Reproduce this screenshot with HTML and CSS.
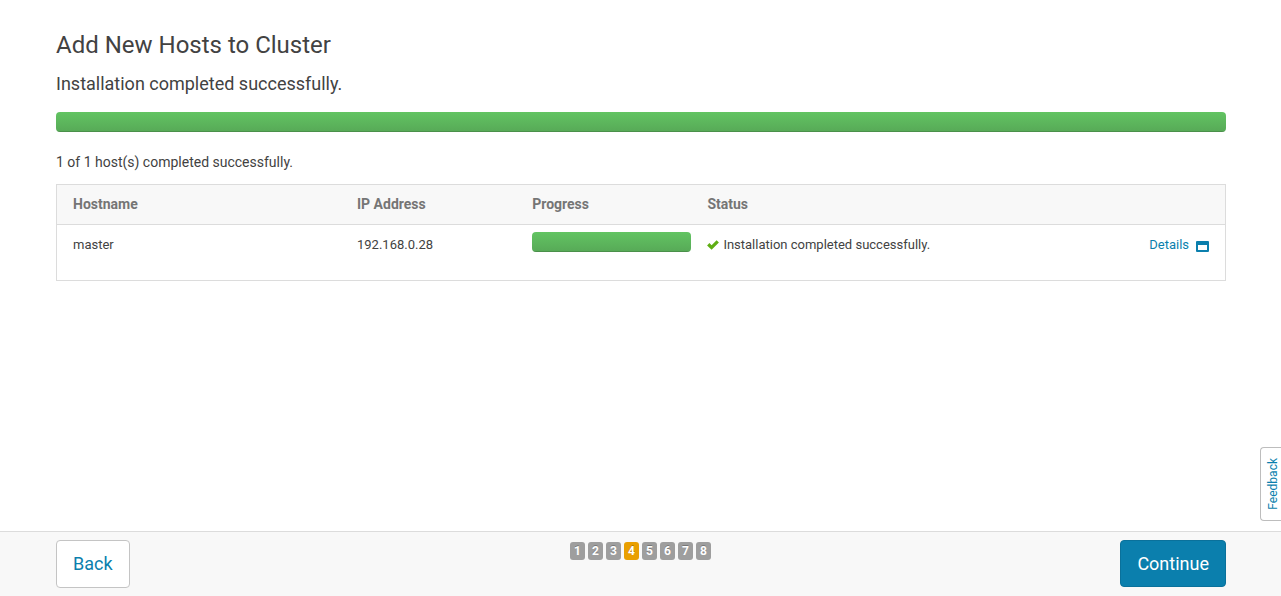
FILE: index.html
```html
<!DOCTYPE html>
<html lang="en">
<head>
<meta charset="utf-8">
<title>Add New Hosts to Cluster</title>
<link rel="stylesheet" href="styles.css">
</head>
<body class="page">
<main class="content">
  <h1 class="title">Add New Hosts to Cluster</h1>
  <h2 class="subtitle">Installation completed successfully.</h2>
  <div class="progress" role="progressbar" aria-label="Installation" aria-valuenow="100"><div class="progress-fill" style="width: 100%"></div></div>
  <p class="summary">1 of 1 host(s) completed successfully.</p>
  <table class="hosts">
    <thead>
      <tr>
        <th class="col-host">Hostname</th>
        <th class="col-fixed">IP Address</th>
        <th class="col-fixed">Progress</th>
        <th>Status</th>
        <th class="col-details"></th>
      </tr>
    </thead>
    <tbody>
      <tr>
        <td class="text-cell">master</td>
        <td class="text-cell">192.168.0.28</td>
        <td><div class="progress" role="progressbar" aria-label="master" aria-valuenow="100"><div class="progress-fill" style="width: 100%"></div></div></td>
        <td class="text-cell"><span class="status"><svg class="check" viewBox="0 0 12 10" aria-hidden="true"><path d="M0.1 5.4 2.4 3.1 4.6 5.2 9.6 0.3 11.9 2.6 4.6 9.8Z"/></svg>Installation completed successfully.</span></td>
        <td class="text-cell"><a class="details" href="#details">Details<svg class="window" viewBox="0 0 13 11" aria-hidden="true"><path fill-rule="evenodd" d="M1 0H12Q13 0 13 1V10Q13 11 12 11H1Q0 11 0 10V1Q0 0 1 0ZM2 4V9H11V4Z"/></svg></a></td>
      </tr>
    </tbody>
  </table>
</main>
<button class="feedback" type="button">Feedback</button>
<footer class="footer">
  <button class="btn" type="button">Back</button>
  <ol class="steps">
    <li class="step">1</li>
    <li class="step">2</li>
    <li class="step">3</li>
    <li class="step step-current" aria-current="step">4</li>
    <li class="step">5</li>
    <li class="step">6</li>
    <li class="step">7</li>
    <li class="step">8</li>
  </ol>
  <button class="btn btn-primary" type="button">Continue</button>
</footer>
</body>
</html>
```

FILE: styles.css
```css
* {
  box-sizing: border-box;
}

.page {
  display: flex;
  flex-direction: column;
  min-height: 100vh;
  margin: 0;
  background: #fff;
  color: #424242;
  font-family: Roboto, "Liberation Sans", sans-serif;
  font-size: 14px;
  line-height: 20px;
}

.content {
  flex: 1;
  padding: 28px 55px 28px 56px;
}

.title {
  margin: 0;
  font-size: 24px;
  font-weight: 400;
  line-height: 34px;
}

.subtitle {
  margin: 10px 0 16px;
  font-size: 18px;
  font-weight: 400;
  line-height: 24px;
}

.progress {
  height: 20px;
  margin-bottom: 20px;
  overflow: hidden;
  border-radius: 4px;
  background: #f5f5f5;
}

.progress-fill {
  height: 100%;
  background: linear-gradient(#62c462, #57a957);
  box-shadow: inset 0 -1px 0 rgba(0, 0, 0, 0.15);
}

.summary {
  margin: 0 0 12px;
}

.hosts {
  width: 100%;
  table-layout: fixed;
  border: 1px solid #dcdcdc;
  border-spacing: 0;
  font-size: 13px;
}

.hosts th {
  height: 40px;
  padding: 0 8px 2px;
  border-bottom: 1px solid #dcdcdc;
  background: #f8f8f8;
  color: #757575;
  font-size: 14px;
  font-weight: 700;
  text-align: left;
}

.hosts td {
  padding: 7px 8px 8px;
  vertical-align: top;
}

.hosts .text-cell {
  padding-top: 10px;
}

.hosts th:first-child,
.hosts td:first-child {
  padding-left: 16px;
}

.hosts th:last-child,
.hosts td:last-child {
  padding-right: 16px;
}

.col-host {
  width: 25%;
}

.col-fixed {
  width: 15%;
}

.col-details {
  width: 100px;
}

.status {
  display: flex;
  align-items: center;
  gap: 4px;
}

.check {
  width: 12px;
  height: 10px;
  fill: #5fae14;
}

.details {
  display: flex;
  align-items: center;
  justify-content: flex-end;
  gap: 7px;
  color: #0b7fad;
  text-decoration: none;
}

.window {
  width: 13px;
  height: 11px;
  margin-top: 3px;
  fill: #0b7fad;
}

.feedback {
  position: fixed;
  right: 0;
  bottom: 75px;
  height: 74px;
  width: 21px;
  padding: 0 0 0 4px;
  border: 1px solid #bdbdbd;
  border-right: 0;
  border-radius: 4px 0 0 4px;
  background: #fff;
  color: #0b7fad;
  font-family: inherit;
  font-size: 12px;
  line-height: 16px;
  writing-mode: sideways-lr;
}

.footer {
  display: grid;
  grid-template-columns: 1fr auto 1fr;
  align-items: start;
  padding: 8px 55px;
  border-top: 1px solid #dcdcdc;
  background: #f8f8f8;
}

.btn {
  justify-self: start;
  height: 48px;
  margin-left: 1px;
  padding: 0 16px;
  border: 1px solid #c4c4c4;
  border-radius: 4px;
  background: #fff;
  color: #0b7fad;
  font-family: inherit;
  font-size: 18px;
  line-height: 24px;
}

.btn-primary {
  justify-self: end;
  height: 47px;
  border-color: #0a719b;
  background: #0b7fad;
  color: #fff;
}

.steps {
  display: flex;
  gap: 3px;
  margin: 2px 0 0;
  padding: 0;
  list-style: none;
}

.step {
  width: 15px;
  height: 18px;
  border-radius: 3px;
  background: #9e9e9e;
  color: #fff;
  font-size: 12px;
  font-weight: 700;
  line-height: 18px;
  text-align: center;
  text-shadow: 0 -1px 0 rgba(0, 0, 0, 0.25);
}

.step-current {
  background: #e99f00;
}
```
